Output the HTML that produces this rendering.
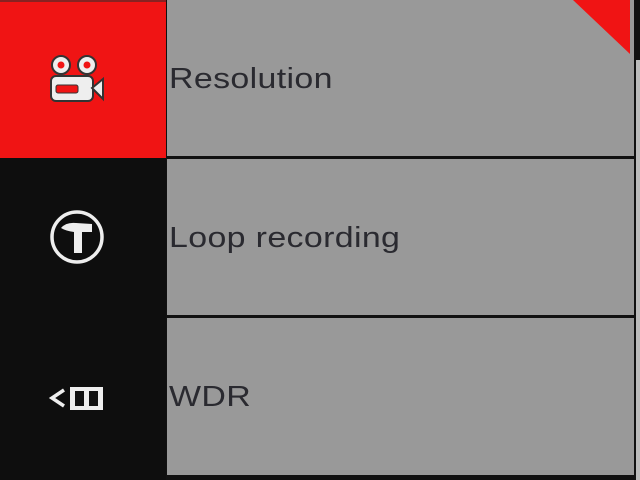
<!DOCTYPE html>
<html><head><style>
body{margin:0;width:640px;height:480px;overflow:hidden;background:#111;position:relative;font-family:"Liberation Sans",sans-serif}
div{position:absolute}
.g{left:167px;width:467px;background:#999}
.t{left:169px;font-size:29px;color:#2a2a30;letter-spacing:0.3px;transform:scaleX(1.17);transform-origin:0 0}
</style></head><body>
<div style="left:0;top:0;width:166px;height:158px;background:#f01414;border-top:2px solid #822"></div>
<div style="left:0;top:158px;width:166px;height:322px;background:#0e0e0e"></div>
<div class="g" style="top:0;height:156px"></div>
<div class="g" style="top:159px;height:156px"></div>
<div class="g" style="top:318px;height:157px"></div>
<div style="left:636px;top:60px;width:4px;height:420px;background:#bbb"></div>
<svg style="position:absolute;left:0;top:0" width="640" height="480">
<polygon points="573,0 630,0 630,54" fill="#f01414"/>
<g fill="#eee" stroke="#333" stroke-width="2">
<circle cx="61" cy="65" r="9"/><circle cx="87" cy="65" r="9"/>
<rect x="51" y="76" width="42" height="25" rx="5"/>
<polygon points="92,88 103,79 103,99"/>
</g>
<circle cx="61" cy="65" r="3.5" fill="#f01414"/><circle cx="87" cy="65" r="3.5" fill="#f01414"/>
<rect x="56" y="85" width="22" height="8" rx="2" fill="#f01414" stroke="#333"/>
<circle cx="77" cy="237" r="25" fill="none" stroke="#eee" stroke-width="3.5"/>
<path d="M61 228 Q66 222 76 223 L92 224 L92 232 L82 232 L82 253 L74 253 L74 232 Q66 231 61 228Z" fill="#eee"/>
<path d="M64 390 L52 398 L64 406" fill="none" stroke="#eee" stroke-width="3.5"/>
<rect x="70" y="387" width="33" height="23" fill="#eee"/>
<rect x="75" y="391" width="9" height="15" fill="#111"/><rect x="89" y="391" width="9" height="15" fill="#111"/>
<rect x="85" y="391" width="3" height="15" fill="#eee"/>
</svg>
<div class="t" style="top:63px">Resolution</div>
<div class="t" style="top:222px">Loop recording</div>
<div class="t" style="top:381px">WDR</div>
</body></html>
